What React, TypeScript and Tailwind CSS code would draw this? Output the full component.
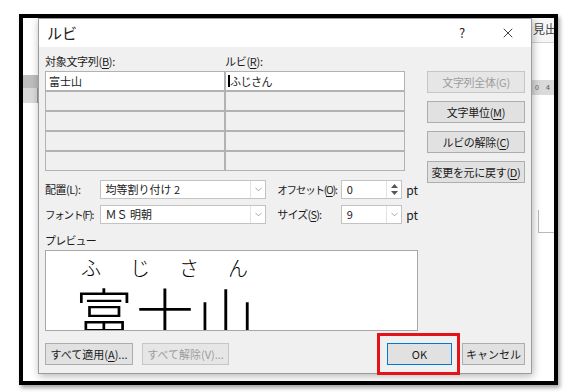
import { X, ChevronDown } from 'lucide-react';
import type { ReactNode } from 'react';

const Btn = ({ children, disabled = false, className = '' }: { children: ReactNode; disabled?: boolean; className?: string }) => (
    <div
        className={`flex items-center justify-center h-[22px] border text-[11px] whitespace-nowrap ${disabled ? 'bg-[#e6e6e6] border-[#c6c6c6] text-[#9d9d9d]' : 'bg-[#e1e1e1] border-[#adadad] text-[#1a1a1a]'} ${className}`}
    >
        {children}
    </div>
);

const U = ({ children }: { children: ReactNode }) => <span className="underline underline-offset-2">{children}</span>;

const Combo = ({ value, width }: { value: string; width: string }) => (
    <div className={`flex h-[19px] bg-white border border-[#c3c3c3] ${width}`}>
        <span className="flex-1 pl-[5px] leading-[17px] whitespace-nowrap">{value}</span>
        <span className="w-[15px] h-full flex items-center justify-center border-l border-[#e2e2e2]">
            <ChevronDown size={11} strokeWidth={1.4} className="text-[#7a7a7a]" />
        </span>
    </div>
);

const Spin = ({ value }: { value: string }) => (
    <div className="flex h-[19px] w-[62px] bg-white border border-[#c3c3c3]">
        <span className="flex-1 pl-[5px] leading-[17px]">{value}</span>
        <span className="w-[15px] h-full flex flex-col items-center justify-center gap-[3px] border-l border-[#e2e2e2]">
            <svg width="7" height="4" viewBox="0 0 7 4"><path d="M0 4 L3.5 0 L7 4 Z" fill="#555" /></svg>
            <svg width="7" height="4" viewBox="0 0 7 4"><path d="M0 0 L3.5 4 L7 0 Z" fill="#555" /></svg>
        </span>
    </div>
);

export default function App() {
    return (
        <div className="w-[569px] h-[392px] bg-white pt-[14px] pl-[19px] font-['Noto_Sans_CJK_JP',sans-serif] text-[11px] text-[#1a1a1a]">
            <div className="relative w-[539px] h-[371px] border-4 border-black bg-white shadow-[2px_3px_4px_rgba(0,0,0,0.35)] overflow-hidden">

                {/* Word window behind the dialog */}
                <div className="flex h-full">
                    <div className="w-[15px] flex flex-col">
                        <div className="h-[57px]"></div>
                        <div className="h-[13px] bg-[#bdbdbd]"></div>
                        <div className="h-[15px] bg-[#d9d9d9] border-r border-[#9a9a9a]"></div>
                    </div>
                    <div className="flex-1"></div>
                    <div className="w-[22px] flex flex-col">
                        <div className="h-[25px] bg-[#f6f6f6] border-b border-[#d2d2d2] pl-[1px] text-[12px] leading-[22px] text-[#444] whitespace-nowrap overflow-hidden">見出</div>
                        <div className="h-[37px]"></div>
                        <div className="h-[15px] bg-[#dadada] flex items-center gap-[7px] pl-[3px] text-[7px] text-[#555]">
                            <span>0</span>
                            <span>4</span>
                        </div>
                        <div className="h-[115px]"></div>
                        <div className="ml-[6px] h-[23px] border-l border-b border-[#b9b9b9]"></div>
                    </div>
                </div>

                {/* Dialog */}
                <div className="absolute left-[15px] top-0 w-[494px] h-[356px] border border-[#9c9c9c] bg-[#f0f0f0] shadow-[1px_2px_8px_rgba(0,0,0,0.3)] flex flex-col">
                    {/* Title bar */}
                    <div className="h-[28px] bg-white flex items-center">
                        <span className="pl-[8px] text-[15px] text-[#222]">ルビ</span>
                        <div className="flex-1"></div>
                        <span className="w-[46px] text-center text-[13px] text-[#222]">?</span>
                        <span className="w-[46px] flex justify-center">
                            <X size={16} strokeWidth={1.3} className="text-[#222]" />
                        </span>
                    </div>

                    {/* Body */}
                    <div className="flex-1 px-[6px] pt-[6px]">
                        <div className="flex">
                            {/* Left column */}
                            <div className="w-[373px]">
                                <div className="flex h-[16px] items-center mb-[2px] whitespace-nowrap tracking-[-0.3px]">
                                    <span className="w-[180px]">対象文字列(<U>B</U>):</span>
                                    <span>ルビ(<U>R</U>):</span>
                                </div>

                                <div className="w-[360px]">
                                    {[0, 1, 2, 3, 4].map((i) => (
                                        <div key={i} className="flex h-[20px]">
                                            <div className={`w-[180px] border border-[#b2b2b2] pl-[3px] leading-[18px] ${i === 0 ? 'bg-white' : 'bg-[#f0f0f0]'}`}>
                                                {i === 0 ? '富士山' : ''}
                                            </div>
                                            <div className={`w-[180px] border border-[#b2b2b2] pl-[2px] flex items-center ${i === 0 ? 'bg-white' : 'bg-[#f0f0f0]'}`}>
                                                {i === 0 && (
                                                    <>
                                                        <span className="w-[2px] h-[12px] bg-black"></span>
                                                        <span className="tracking-[-0.5px]">ふじさん</span>
                                                    </>
                                                )}
                                            </div>
                                        </div>
                                    ))}
                                </div>

                                <div className="flex items-center mt-[9px] h-[19px] whitespace-nowrap">
                                    <span className="w-[55px] tracking-[-0.5px]">配置(L):</span>
                                    <Combo value="均等割り付け 2" width="w-[168px]" />
                                    <span className="w-[75px] pl-[11px] text-[10.5px] tracking-[-1.2px]">オフセット(<U>O</U>):</span>
                                    <Spin value="0" />
                                    <span className="ml-[4px] text-[12px]">pt</span>
                                </div>

                                <div className="flex items-center mt-[6px] h-[19px] whitespace-nowrap">
                                    <span className="w-[55px] text-[10.5px] tracking-[-1.2px]">フォント(F):</span>
                                    <Combo value="ＭＳ 明朝" width="w-[168px]" />
                                    <span className="w-[75px] pl-[11px] tracking-[-0.8px]">サイズ(<U>S</U>):</span>
                                    <Combo value="9" width="w-[62px]" />
                                    <span className="ml-[4px] text-[12px]">pt</span>
                                </div>

                                <div className="mt-[8px] h-[16px] leading-[16px] tracking-[-0.8px]">プレビュー</div>

                                <div className="mt-[2px] h-[81px] w-[373px] bg-white border border-[#a8a8a8] overflow-hidden text-black font-light">
                                    <div className="pt-[7px] pl-[35px] text-[20px] leading-none tracking-[29px] whitespace-nowrap">ふじさん</div>
                                    <div className="mt-[5px] pl-[29px] text-[58px] leading-none tracking-[3px] whitespace-nowrap">富士山</div>
                                </div>
                            </div>

                            {/* Right column */}
                            <div className="ml-[9px] w-[98px] mt-[18px] flex flex-col gap-[8px] tracking-[-0.3px]">
                                <Btn disabled>文字列全体(G)</Btn>
                                <Btn>文字単位(<U>M</U>)</Btn>
                                <Btn>ルビの解除(<U>C</U>)</Btn>
                                <Btn>変更を元に戻す(<U>D</U>)</Btn>
                            </div>
                        </div>

                        {/* Bottom buttons */}
                        <div className="flex mt-[12px]">
                            <Btn className="w-[88px]">すべて適用(<U>A</U>)...</Btn>
                            <Btn disabled className="w-[87px] ml-[9px]">すべて解除(V)...</Btn>
                            <div className="flex-1"></div>
                            <div className="w-[65px] h-[22px] flex items-center justify-center border border-[#0078d7] bg-[#e1e1e1] text-[11px]">OK</div>
                            <Btn className="w-[63px] ml-[10px]">キャンセル</Btn>
                        </div>
                    </div>
                </div>

                {/* Red highlight round OK */}
                <div className="absolute left-[354px] top-[315px] w-[83px] h-[42px] border-[3px] border-[#e3131b]"></div>
            </div>
        </div>
    );
}
